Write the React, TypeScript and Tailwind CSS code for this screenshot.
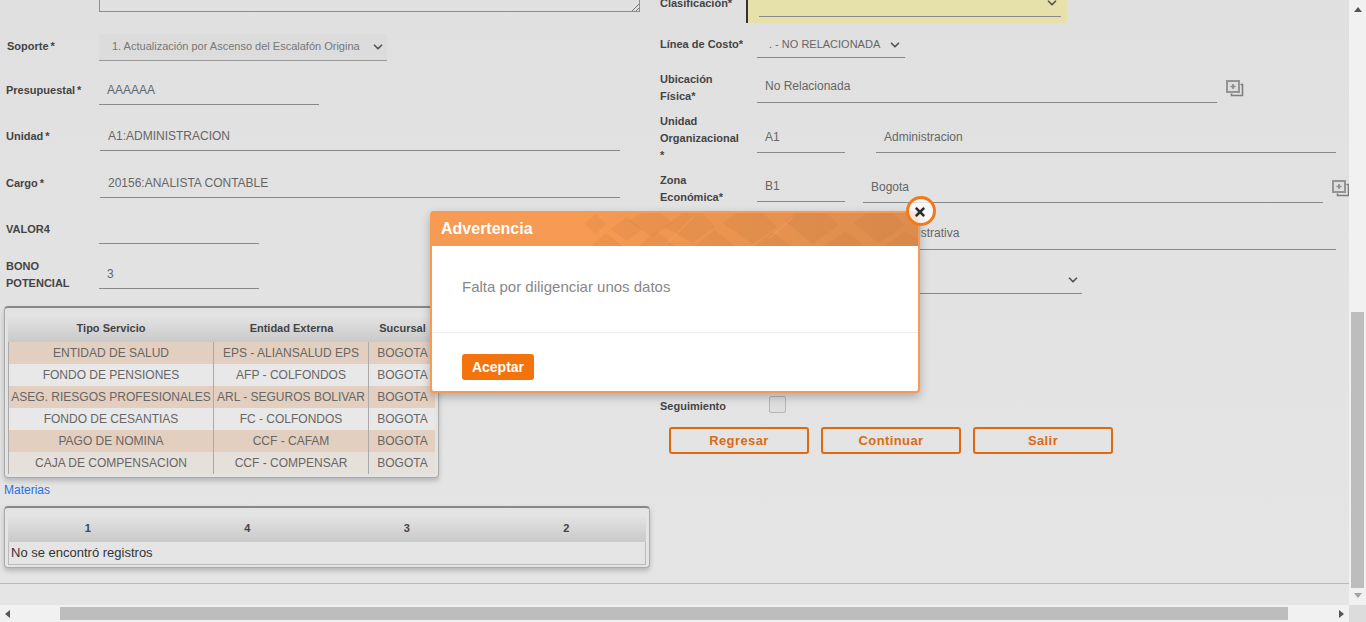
import { FaTimes } from "react-icons/fa";
import { ChevronDown } from "lucide-react";

const tiposServicio = [
  ["ENTIDAD DE SALUD", "EPS - ALIANSALUD EPS", "BOGOTA", "bg-[#e3cfbf]"],
  ["FONDO DE PENSIONES", "AFP - COLFONDOS", "BOGOTA", "bg-[#e8e8e8]"],
  ["ASEG. RIESGOS PROFESIONALES", "ARL - SEGUROS BOLIVAR", "BOGOTA", "bg-[#e3cfbf]"],
  ["FONDO DE CESANTIAS", "FC - COLFONDOS", "BOGOTA", "bg-[#e8e8e8]"],
  ["PAGO DE NOMINA", "CCF - CAFAM", "BOGOTA", "bg-[#e3cfbf]"],
  ["CAJA DE COMPENSACION", "CCF - COMPENSAR", "BOGOTA", "bg-[#e6e0da]"],
];

const Chevron = () => (
  <ChevronDown size={14} strokeWidth={3} className="text-[#555]" />
);

const CopyPlusIcon = () => (
  <svg width="18" height="17" viewBox="0 0 18 17" className="shrink-0">
    <rect x="1" y="1" width="12" height="11" fill="#dedede" stroke="#949494" strokeWidth="2" />
    <path d="M7 4v5M4.5 6.5h5" stroke="#8a8a8a" strokeWidth="1.6" />
    <path d="M14.5 4.5H16.5V15.5H5.5V13.5" fill="none" stroke="#7d7d7d" strokeWidth="1.6" />
  </svg>
);

const Label = ({ children, className = "" }: { children: React.ReactNode; className?: string }) => (
  <div className={`text-[11px] leading-[17px] font-bold text-[#444] ${className}`}>{children}</div>
);

const HeaderPattern = () => (
  <svg className="absolute inset-0 h-full w-full" viewBox="0 0 485 33" preserveAspectRatio="none">
    <defs>
      <linearGradient id="fade" x1="0" x2="1" y1="0" y2="0">
        <stop offset="0" stopColor="#f79a53" />
        <stop offset="0.5" stopColor="#e9934f" />
        <stop offset="1" stopColor="#dc8c4d" />
      </linearGradient>
    </defs>
    <rect x="150" width="335" height="33" fill="url(#fade)" />
    <g fill="#b8723a" fillOpacity="0.14">
      <path d="M152 11l11-10 11 10-11 10z" />
      <path d="M158 33l16-13 16 13z" />
      <path d="M178 16l16-12 16 12-16 12z" />
      <path d="M196 8l14-8h18l12 10-20 14z" />
      <path d="M206 33l18-15 18 15z" />
      <path d="M232 14l18-14h20l12 14-22 16z" />
      <path d="M262 33l20-16 20 16z" />
      <path d="M290 10l14-10h26l14 14-24 17z" />
      <path d="M322 33l18-14 18 14z" />
      <path d="M352 8l10-8h32l12 12-26 19z" />
      <path d="M392 33l20-15 20 15z" />
      <path d="M420 10l14-10h26l12 12-26 18z" />
      <path d="M452 33l20-15 13 9v6z" />
    </g>
    <path d="M232 33L262 3M336 26l24-22" stroke="#f6a86c" strokeWidth="0.6" fill="none" />
  </svg>
);

const App = () => {
  return (
    <div className="relative flex h-[622px] w-[1366px] flex-col overflow-hidden bg-[#f1f1f1] font-['Liberation_Sans',Arial,sans-serif]">
      <div className="flex min-h-0 flex-1">

        {/* PAGE */}
        <div className="flex w-[1349px] flex-col bg-gradient-to-b from-[#e0e0e0] to-[#e5e5e5]">
          <div className="flex h-[584px] border-b border-[#bbb]">

            {/* LEFT COLUMN */}
            <div className="flex w-[660px] shrink-0 flex-col">
              <div className="relative ml-[99px] h-3 w-[541px] border-x border-b border-[#8f8f8f]">
                <svg width="8" height="8" viewBox="0 0 8 8" className="absolute bottom-0 right-0">
                  <path d="M1 8l7-7M5 8l3-3" stroke="#777" strokeWidth="1" />
                </svg>
              </div>

              {/* SOPORTE */}
              <div className="mt-[21px] flex h-[28px] items-center pl-[7px]">
                <Label className="mb-[2px] w-[92px]">Soporte<span className="ml-0.5">*</span></Label>
                <div className="flex h-[27px] w-[288px] items-center justify-between whitespace-nowrap border-b border-[#999] bg-[#dcdcdc] pl-[13px] pr-[2px] text-[11px] text-[#777]">
                  1. Actualización por Ascenso del Escalafón Origina
                  <Chevron />
                </div>
              </div>

              {/* PRESUPUESTAL */}
              <div className="mt-[17px] flex h-[27px] items-center pl-[6px]">
                <Label className="mb-[2px] w-[93px]">Presupuestal<span className="ml-0.5">*</span></Label>
                <div className="flex h-[27px] w-[220px] items-center border-b border-[#888] pb-[3px] pl-2 text-xs text-[#666]">AAAAAA</div>
              </div>

              {/* UNIDAD */}
              <div className="mt-[19px] flex h-[27px] items-center pl-[6px]">
                <Label className="mb-[2px] w-[94px]">Unidad<span className="ml-0.5">*</span></Label>
                <div className="flex h-[27px] w-[520px] items-center border-b border-[#888] pb-[3px] pl-2 text-xs text-[#666]">A1:ADMINISTRACION</div>
              </div>

              {/* CARGO */}
              <div className="mt-[20px] flex h-[27px] items-center pl-[6px]">
                <Label className="mb-[2px] w-[94px]">Cargo<span className="ml-0.5">*</span></Label>
                <div className="flex h-[27px] w-[520px] items-center border-b border-[#888] pb-[3px] pl-2 text-xs text-[#666]">20156:ANALISTA CONTABLE</div>
              </div>

              {/* VALOR4 */}
              <div className="mt-[19px] flex h-[27px] items-center pl-[6px]">
                <Label className="mb-[3px] w-[93px]">VALOR4</Label>
                <div className="h-[27px] w-[160px] border-b border-[#888]" />
              </div>

              {/* BONO POTENCIAL */}
              <div className="mt-[18px] flex h-[27px] items-center pl-[6px]">
                <Label className="mb-[2px] w-[93px] pr-[12px]">BONO POTENCIAL</Label>
                <div className="flex h-[27px] w-[160px] items-center border-b border-[#888] pb-[3px] pl-2 text-xs text-[#666]">3</div>
              </div>

              {/* TIPOS DE SERVICIO */}
              <div className="ml-1 mt-[17px] h-[172px] w-[435px] rounded border-x border-b border-t-2 border-[#aaa] border-t-[#888] px-[3px] pt-[7px] shadow-[0_3px_5px_rgba(0,0,0,0.2)]">
                <div className="grid h-[27px] grid-cols-[206px_155px_67px] rounded-t-sm bg-gradient-to-b from-[#e4e4e4] to-[#c9c9c9] text-center text-[11px] font-bold leading-[27px] text-[#444]">
                  <div>Tipo Servicio</div>
                  <div>Entidad Externa</div>
                  <div>Sucursal</div>
                </div>
                {tiposServicio.map(([tipo, entidad, sucursal, color]) => (
                  <div key={tipo} className={`grid h-[22px] grid-cols-[205px_155px_67px] border-l border-[#aaa] text-center text-xs leading-[22px] text-[#666] ${color}`}>
                    <div className="whitespace-nowrap border-r border-[#aaa]">{tipo}</div>
                    <div className="whitespace-nowrap border-r border-[#aaa]">{entidad}</div>
                    <div>{sucursal}</div>
                  </div>
                ))}
              </div>

              <a className="ml-1 mt-[4px] text-xs leading-4 text-[#2b6fe0]">Materias</a>

              {/* MATERIAS */}
              <div className="ml-1 mt-2 h-[62px] w-[646px] rounded border-x border-b border-t-2 border-[#aaa] border-t-[#888] px-[3px] pt-[7px] shadow-[0_3px_5px_rgba(0,0,0,0.2)]">
                <div className="grid h-[27px] grid-cols-4 rounded-t-sm bg-gradient-to-b from-[#e4e4e4] to-[#c9c9c9] text-center text-[11px] font-bold leading-[27px] text-[#444]">
                  <div className="text-[#2d4a66]">1</div>
                  <div>4</div>
                  <div>3</div>
                  <div>2</div>
                </div>
                <div className="h-[23px] border-x border-b border-[#bbb] pl-[2px] text-[13px] leading-[21px] text-[#333]">No se encontró registros</div>
              </div>
            </div>

            {/* RIGHT COLUMN */}
            <div className="flex flex-1 flex-col">

              {/* CLASIFICACION */}
              <div className="flex h-[23px]">
                <Label className="-mt-[5px] w-[86px]">Clasificación*</Label>
                <div className="flex h-[23px] w-[321px] items-start border-l-2 border-[#333] bg-[#e6e0aa] pl-[11px] pr-[6px]">
                  <div className="flex h-[17px] w-[302px] items-start justify-end border-b border-[#888] pr-[2px]">
                    <div className="-mt-1"><Chevron /></div>
                  </div>
                </div>
              </div>

              {/* LINEA DE COSTO */}
              <div className="mt-2 flex h-[27px] items-center">
                <Label className="w-[97px]">Línea de Costo*</Label>
                <div className="flex h-[27px] w-[148px] items-center justify-between whitespace-nowrap border-b border-[#888] pl-[12px] pr-[3px] pt-[1px] text-[11px] text-[#666]">
                  . - NO RELACIONADA
                  <Chevron />
                </div>
              </div>

              {/* UBICACION */}
              <div className="mt-[13px] flex h-[34px]">
                <Label className="w-[97px] pr-[20px]">Ubicación Física*</Label>
                <div className="flex h-[32px] w-[460px] items-center border-b border-[#888] pb-[1px] pl-2 text-xs text-[#666]">No Relacionada</div>
                <div className="ml-[9px] mt-[9px]"><CopyPlusIcon /></div>
              </div>

              {/* UNIDAD ORGANIZACIONAL */}
              <div className="mt-[8px] flex h-[50px]">
                <Label className="w-[97px] pr-[14px]">Unidad Organizacional *</Label>
                <div className="flex h-[40px] w-[88px] items-end border-b border-[#888] pb-[7px] pl-2 text-xs text-[#666]">A1</div>
                <div className="ml-[31px] flex h-[40px] w-[460px] items-end border-b border-[#888] pb-[7px] pl-2 text-xs text-[#666]">Administracion</div>
              </div>

              {/* ZONA ECONOMICA */}
              <div className="mt-[8px] flex h-[40px]">
                <Label className="mt-[1px] w-[97px] pr-[20px]">Zona Económica*</Label>
                <div className="flex h-[31px] w-[88px] items-end border-b border-[#888] pb-[7px] pl-2 text-xs text-[#666]">B1</div>
                <div className="ml-[18px] flex h-[32px] w-[460px] items-end border-b border-[#888] pb-[7px] pl-2 text-xs text-[#666]">Bogota</div>
                <div className="ml-[9px] mt-[9px]"><CopyPlusIcon /></div>
              </div>

              {/* TIPO */}
              <div className="ml-[216px] flex h-[39px] w-[460px] items-end border-b border-[#888] pb-[8px] pl-2 text-xs text-[#666]">Administrativa</div>

              {/* SELECT BAJO EL MODAL */}
              <div className="mt-[16px] flex h-[28px] w-[422px] items-center justify-end border-b border-[#888] pr-[2px]">
                <Chevron />
              </div>

              {/* SEGUIMIENTO */}
              <div className="mt-[102px] flex h-[17px] items-center">
                <Label className="mt-[3px] w-[109px]">Seguimiento</Label>
                <div className="h-[17px] w-[17px] rounded-[2px] border border-[#b5b5b5] bg-[#dedede]" />
              </div>

              {/* ACTIONS */}
              <div className="ml-[9px] mt-[14px] flex gap-3">
                <button className="h-[27px] w-[140px] rounded-[3px] border-2 border-[#dd6a10] text-[13px] font-bold tracking-[0.4px] text-[#dd6a10]">Regresar</button>
                <button className="h-[27px] w-[140px] rounded-[3px] border-2 border-[#dd6a10] text-[13px] font-bold tracking-[0.4px] text-[#dd6a10]">Continuar</button>
                <button className="h-[27px] w-[140px] rounded-[3px] border-2 border-[#dd6a10] text-[13px] font-bold tracking-[0.4px] text-[#dd6a10]">Salir</button>
              </div>
            </div>
          </div>
        </div>

        {/* VERTICAL SCROLLBAR */}
        <div className="flex w-[17px] flex-col items-center justify-between bg-[#f1f1f1] py-[7px]">
          <div className="h-0 w-0 border-x-[4px] border-b-[5px] border-x-transparent border-b-[#555]" />
          <div className="h-0 w-0 border-x-[4px] border-t-[5px] border-x-transparent border-t-[#a3a3a3]" />
        </div>
      </div>

      {/* HORIZONTAL SCROLLBAR */}
      <div className="flex h-[17px] items-center bg-[#f1f1f1]">
        <div className="ml-[5px] h-0 w-0 border-y-[4px] border-r-[5px] border-y-transparent border-r-[#555]" />
        <div className="ml-[50px] h-[13px] w-[1228px] bg-[#bdbdbd]" />
        <div className="ml-[51px] h-0 w-0 border-y-[4px] border-l-[5px] border-y-transparent border-l-[#555]" />
        <div className="ml-[5px] h-[17px] w-[17px] bg-[#dcdcdc]" />
      </div>

      {/* VERTICAL THUMB */}
      <div className="absolute left-[1351px] top-[312px] h-[276px] w-[13px] bg-[#bdbdbd]" />

      {/* MODAL */}
      <div className="absolute left-[430px] top-[211px] h-[182px] w-[490px] rounded border-2 border-[#f79a53] bg-white shadow-[0_4px_10px_rgba(0,0,0,0.25)]">
        <div className="relative flex h-[33px] items-center overflow-hidden bg-[#f79a53] pb-[1px] pl-[9px]">
          <HeaderPattern />
          <span className="relative text-base font-bold text-white">Advertencia</span>
        </div>
        <div className="flex h-[87px] items-center border-b border-[#eee] pb-[4px] pl-[30px] text-[15px] text-[#888]">
          Falta por diligenciar unos datos
        </div>
        <div className="pl-[30px] pt-[21px]">
          <button className="h-[26px] w-[72px] rounded-[3px] bg-[#f3730d] text-sm font-bold text-white">Aceptar</button>
        </div>
        <div className="absolute -right-[18px] -top-[17px] flex h-[30px] w-[30px] items-center justify-center rounded-full border-[3px] border-[#f4771a] bg-white/75 pr-[3px] pt-[1px]">
          <FaTimes size={14} className="text-[#2b2b2b]" />
        </div>
      </div>
    </div>
  );
};

export default App;
